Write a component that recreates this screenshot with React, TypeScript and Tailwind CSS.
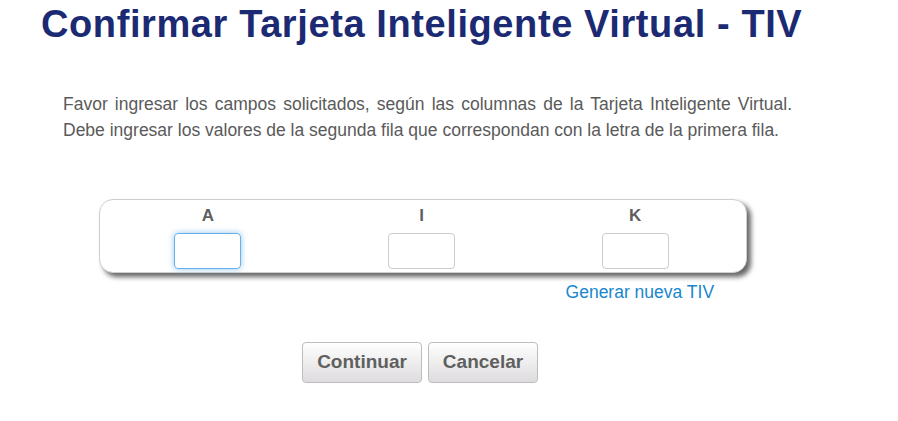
import React from 'react'

const cols = ['A', 'I', 'K']

export default function App() {
    return (
        <div className="min-h-screen bg-white font-['Liberation_Sans',Arial,sans-serif]">
            <h1 className="pl-[41px] pt-[1px] text-[38px] leading-[46px] tracking-[0.6px] font-bold text-[#1b2a72]">
                Confirmar Tarjeta Inteligente Virtual - TIV
            </h1>

            <div className="ml-[63px] mt-[44px] w-[729px] text-[17.5px] leading-[26px] text-[#5a5a5a]">
                <p className="text-justify [text-align-last:justify]">
                    Favor ingresar los campos solicitados, según las columnas de la Tarjeta Inteligente Virtual.
                </p>
                <p>Debe ingresar los valores de la segunda fila que correspondan con la letra de la primera fila.</p>
            </div>

            {/* tarjeta */}
            <div className="ml-[99px] mt-[56px] w-[648px]">
                <div className="grid grid-cols-3 pl-[1px] pr-[4px] h-[74px] rounded-[14px] border border-[#cfcfcf] bg-white shadow-[4px_4px_5px_rgba(0,0,0,0.6)]">
                    {cols.map((c, i) => (
                        <div key={c} className="flex flex-col items-center pt-[6px]">
                            <span className="text-[17px] leading-[20px] font-bold text-[#5f5f5f]">{c}</span>
                            <input
                                autoFocus={i === 0}
                                className={
                                    i === 0
                                        ? 'mt-[7px] w-[67px] h-[36px] rounded-[4px] border border-[#66afe9] shadow-[0_0_6px_rgba(102,175,233,0.7)] outline-none text-center text-[16px] text-[#555]'
                                        : 'mt-[7px] w-[67px] h-[36px] rounded-[4px] border border-[#cccccc] outline-none text-center text-[16px] text-[#555]'
                                }
                            />
                        </div>
                    ))}
                </div>
                <div className="grid grid-cols-3 pl-[1px] pr-[4px] mt-[9px]">
                    <div />
                    <div />
                    <a href="#" className="justify-self-center pl-[8px] text-[17.5px] leading-[20px] text-[#1a86cf]">
                        Generar nueva TIV
                    </a>
                </div>
            </div>

            <div className="flex gap-[6px] ml-[302px] mt-[40px]">
                <button className="w-[120px] h-[41px] rounded-[4px] border border-[#bdbdbd] bg-gradient-to-b from-white to-[#dedcde] text-[19px] font-bold text-[#5f5f5f]">
                    Continuar
                </button>
                <button className="w-[110px] h-[41px] rounded-[4px] border border-[#bdbdbd] bg-gradient-to-b from-white to-[#dedcde] text-[19px] font-bold text-[#5f5f5f]">
                    Cancelar
                </button>
            </div>
        </div>
    )
}
